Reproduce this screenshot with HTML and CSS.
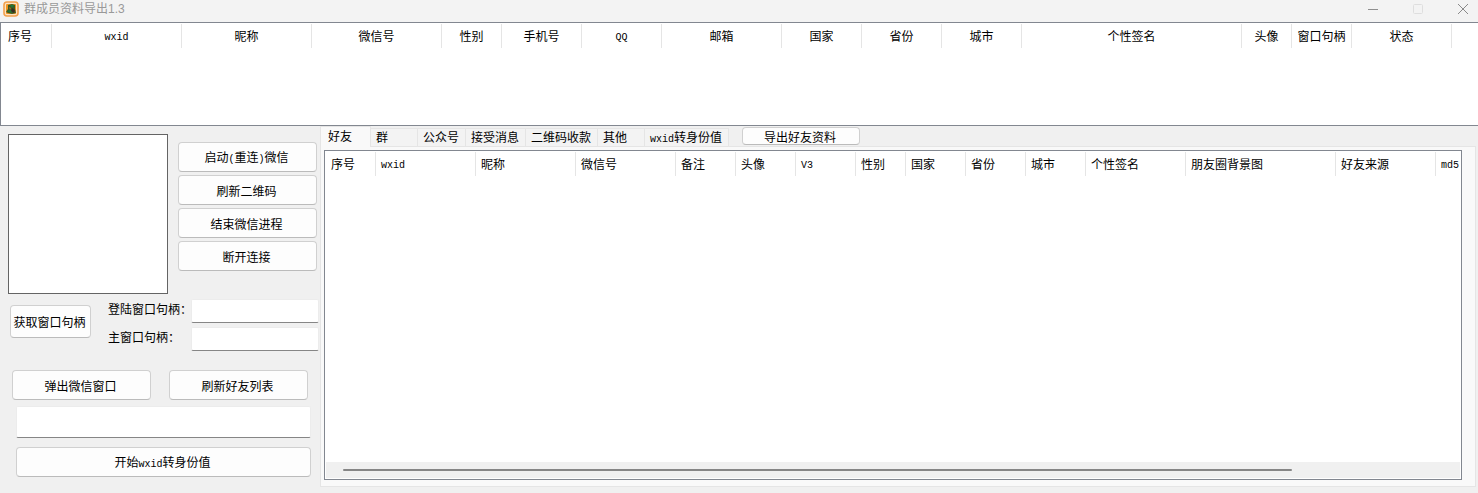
FILE: index.html
```html
<!DOCTYPE html>
<html lang="zh-CN">
<head>
    <meta charset="UTF-8">
    <meta name="viewport" content="width=device-width, initial-scale=1.0">
    <title>群成员资料导出1.3</title>
    <link rel="stylesheet" href="styles.css">
</head>
<body>
    <header class="title-bar">
        <svg class="app-icon" viewBox="0 0 16 16">
            <rect x="1" y="1" width="14" height="14" rx="3" fill="#fbe3c4" stroke="#f3a04c" stroke-width="1.6"/>
            <rect x="3" y="3" width="10" height="10" rx="1" fill="#ee9420"/>
            <path d="M5 4l4-1 3 1v4l1 4-4 1-4-1-2-1 2-3z" fill="#3d5a24"/>
            <path d="M7 4h4l-2 3zM4 10l4-1 1 3z" fill="#1f7a3a"/>
            <path d="M9 7l3 2-1 3-3-2z" fill="#3a2c22"/>
            <path d="M6 6l2 1-1 2z" fill="#c0641c"/>
        </svg>
        <h1>群成员资料导出1.3</h1>
        <div class="window-controls">
            <button type="button" aria-label="最小化"><svg viewBox="0 0 10 10"><path d="M0 5.5h10" stroke="#8f8f8f"/></svg></button>
            <button type="button" aria-label="最大化" disabled><svg viewBox="0 0 10 10"><rect x="0.5" y="0.5" width="9" height="9" rx="1" fill="none" stroke="#dedede"/></svg></button>
            <button type="button" aria-label="关闭"><svg viewBox="0 0 10 10"><path d="M0 0l10 10M10 0L0 10" stroke="#8a8a8a"/></svg></button>
        </div>
    </header>

    <section class="member-list">
        <table class="list">
            <thead>
                <tr>
                    <th class="w50 first">序号</th>
                    <th class="w130"><span class="latin">wxid</span></th>
                    <th class="w130">昵称</th>
                    <th class="w130">微信号</th>
                    <th class="w60">性别</th>
                    <th class="w80">手机号</th>
                    <th class="w80"><span class="latin">QQ</span></th>
                    <th class="w120">邮箱</th>
                    <th class="w80">国家</th>
                    <th class="w80">省份</th>
                    <th class="w80">城市</th>
                    <th class="w220">个性签名</th>
                    <th class="w50">头像</th>
                    <th class="w60">窗口句柄</th>
                    <th class="w100">状态</th>
                </tr>
            </thead>
            <tbody></tbody>
        </table>
    </section>

    <main>
        <aside class="side">
            <div class="login">
                <div class="qrcode"></div>
                <div class="login-buttons">
                    <button type="button" class="btn">启动<span class="latin">(</span>重连<span class="latin">)</span>微信</button>
                    <button type="button" class="btn">刷新二维码</button>
                    <button type="button" class="btn">结束微信进程</button>
                    <button type="button" class="btn">断开连接</button>
                </div>
            </div>
            <div class="handles">
                <button type="button" class="btn handle-button">获取窗口句柄</button>
                <div class="handle-fields">
                    <label for="login-handle">登陆窗口句柄：</label>
                    <input type="text" id="login-handle">
                    <label for="main-handle">主窗口句柄：</label>
                    <input type="text" id="main-handle">
                </div>
            </div>
            <div class="actions">
                <button type="button" class="btn">弹出微信窗口</button>
                <button type="button" class="btn">刷新好友列表</button>
            </div>
            <div class="convert">
                <input type="text" aria-label="wxid">
                <button type="button" class="btn">开始<span class="latin">wxid</span>转身份值</button>
            </div>
        </aside>

        <section class="tabs">
            <div class="tab-bar">
                <div class="tab-list" role="tablist">
                    <button type="button" role="tab" class="tab active" aria-selected="true">好友</button>
                    <button type="button" role="tab" class="tab tab-short">群</button>
                    <button type="button" role="tab" class="tab">公众号</button>
                    <button type="button" role="tab" class="tab">接受消息</button>
                    <button type="button" role="tab" class="tab">二维码收款</button>
                    <button type="button" role="tab" class="tab tab-short">其他</button>
                    <button type="button" role="tab" class="tab"><span class="latin">wxid</span>转身份值</button>
                </div>
                <button type="button" class="btn export-button">导出好友资料</button>
            </div>
            <div class="tab-page" role="tabpanel">
                <div class="friend-list">
                    <table class="list left">
                        <thead>
                            <tr>
                                <th class="w50 first">序号</th>
                                <th class="w100"><span class="latin">wxid</span></th>
                                <th class="w100">昵称</th>
                                <th class="w100">微信号</th>
                                <th class="w60">备注</th>
                                <th class="w60">头像</th>
                                <th class="w60"><span class="latin">V3</span></th>
                                <th class="w50">性别</th>
                                <th class="w60">国家</th>
                                <th class="w60">省份</th>
                                <th class="w60">城市</th>
                                <th class="w100">个性签名</th>
                                <th class="w150">朋友圈背景图</th>
                                <th class="w100">好友来源</th>
                                <th class="w100"><span class="latin">md5</span></th>
                            </tr>
                        </thead>
                        <tbody></tbody>
                    </table>
                    <div class="scrollbar"><div class="thumb"></div></div>
                </div>
            </div>
        </section>
    </main>
</body>
</html>
```
FILE: styles.css
```css
:root {
    --window-color: #F0F0F0;
    --frame-color: #828790;
    --line-color: #E5E5E5;
    --button-border: #D0D0D0;
}

* {
    margin: 0;
    padding: 0;
    box-sizing: border-box;
}

body {
    font-family: "Liberation Sans", "Noto Sans CJK SC", sans-serif;
    font-size: 12px;
    line-height: 16px;
    color: #000;
    background-color: var(--window-color);
    display: flex;
    flex-direction: column;
    min-height: 100vh;
}

button, input {
    font: inherit;
    color: inherit;
}

.latin {
    font-family: "Liberation Mono", monospace;
    font-size: 10px;
}

.title-bar {
    display: flex;
    align-items: center;
    height: 22px;
    padding: 0 10px 4px 3px;
    background-color: #F3F3F3;
}

.app-icon {
    width: 16px;
    height: 16px;
    margin-right: 5px;
}

h1 {
    font-size: 12px;
    font-weight: normal;
    color: #999;
}

.window-controls {
    display: flex;
    gap: 35px;
    margin-left: auto;
}

.window-controls button {
    width: 10px;
    height: 10px;
    border: none;
    background: none;
}

.window-controls svg {
    display: block;
    width: 10px;
    height: 10px;
}

.member-list {
    height: 104px;
    border: 1px solid var(--frame-color);
    border-right: none;
    background-color: #FFF;
    overflow: hidden;
}

.list {
    table-layout: fixed;
    width: 0;
    margin-top: 1px;
    border-collapse: separate;
    border-spacing: 0;
}

.list th {
    height: 24px;
    padding-top: 2px;
    font-weight: normal;
    text-align: center;
    white-space: nowrap;
    border-right: 1px solid var(--line-color);
}

.list .first {
    width: 51px;
    padding-left: 7px;
    text-align: left;
}

.list.left th {
    padding-left: 5px;
    text-align: left;
}

.list.left .first {
    padding-left: 6px;
}

.w50 { width: 50px; }
.w60 { width: 60px; }
.w80 { width: 80px; }
.w100 { width: 100px; }
.w120 { width: 120px; }
.w130 { width: 130px; }
.w150 { width: 150px; }
.w220 { width: 220px; }

main {
    display: flex;
    flex: 1;
}

.side {
    flex: none;
    width: 320px;
    padding: 8px 0 16px 8px;
}

.btn {
    height: 30px;
    padding: 3px 2px 0 0;
    background-color: #FDFDFD;
    border: 1px solid var(--button-border);
    border-bottom-color: #BBB;
    border-radius: 4px;
    white-space: nowrap;
}

.side input {
    display: block;
    width: 100%;
    height: 24px;
    padding: 0 4px;
    background-color: #FFF;
    border: 1px solid #ECECEC;
    border-bottom-color: #868686;
    border-radius: 2px;
}

.login {
    display: flex;
    gap: 10px;
}

.qrcode {
    width: 160px;
    height: 160px;
    background-color: #FFF;
    border: 1px solid #646464;
}

.login-buttons {
    display: flex;
    flex-direction: column;
    gap: 3px;
    width: 139px;
    padding-top: 8px;
}

.handles {
    display: flex;
    align-items: flex-start;
    gap: 17px;
    margin-top: 5px;
    padding-left: 2px;
}

.handle-button {
    flex: none;
    width: 81px;
    height: 33px;
    margin-top: 6px;
}

.handle-fields {
    display: grid;
    grid-template-columns: 83px 128px;
    row-gap: 4px;
}

.handle-fields label {
    padding-top: 3px;
    white-space: nowrap;
}

.actions {
    display: grid;
    grid-template-columns: 139px 139px;
    gap: 18px;
    margin-top: 19px;
    padding-left: 4px;
}

.convert {
    width: 303px;
    margin-top: 6px;
    padding-left: 8px;
}

.convert input {
    height: 32px;
}

.convert .btn {
    width: 100%;
    margin-top: 9px;
}

.tabs {
    flex: 1;
    min-width: 0;
    display: flex;
    flex-direction: column;
    padding: 0 2px 6px 0;
}

.tab-bar {
    display: flex;
    gap: 13px;
    height: 20px;
}

.tab-list {
    display: flex;
    align-items: flex-end;
}

.tab {
    height: 18px;
    padding: 1px 6px 0 5px;
    background-color: #F3F3F3;
    border: 1px solid var(--line-color);
    border-left: none;
    border-bottom: none;
    white-space: nowrap;
}

.tab-short {
    width: 47px;
    text-align: left;
}

/* 选中的标签盖住页面的上边框 */
.tab.active {
    width: 51px;
    height: 21px;
    margin-bottom: -1px;
    padding: 0 7px;
    text-align: left;
    background-color: #F9F9F9;
    border-left: 1px solid var(--line-color);
    z-index: 1;
}

.export-button {
    width: 118px;
    height: 18px;
    margin-top: 1px;
    line-height: 14px;
}

.tab-page {
    flex: 1;
    display: flex;
    padding: 3px 13px 6px 3px;
    background-color: #F9F9F9;
    border: 1px solid var(--line-color);
}

.friend-list {
    flex: 1;
    min-width: 0;
    display: flex;
    flex-direction: column;
    padding-bottom: 1px;
    background-color: #FFF;
    border: 1px solid var(--frame-color);
    overflow: hidden;
}

.scrollbar {
    height: 16px;
    margin: auto 1px 0;
    padding: 7px 0 0 17px;
    background-color: var(--window-color);
}

.thumb {
    width: 85%;
    height: 2px;
    border-radius: 1px;
    background-color: #868686;
}
```
